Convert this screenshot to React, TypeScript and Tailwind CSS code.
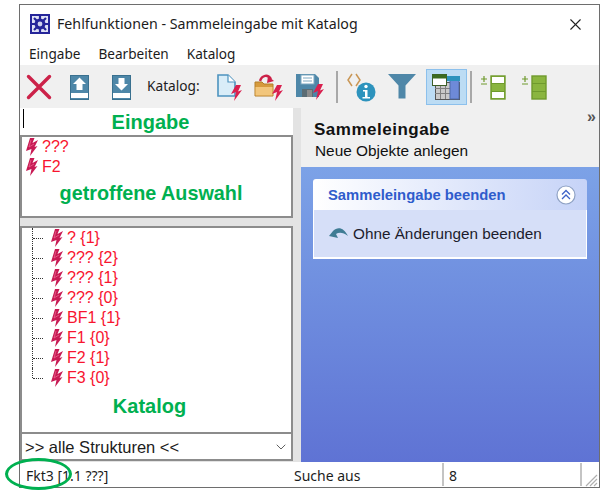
import { ChevronDown, X } from "lucide-react";

const segoe = "font-['Noto_Sans',sans-serif]";
const arial = "font-['Liberation_Sans',Arial,sans-serif]";

// the red flash that marks a malfunction in the lists
function Bolt() {
  return (
    <svg width="14" height="18" viewBox="0 0 14 18" className="shrink-0">
      <path d="M5 0 L9.5 0 L7.5 5 L13 2 L9.5 9 L12.5 8 L5 18 L6.5 11 L1 13 Z" fill="#c81a54" />
      <path d="M6 2 L4 9 L9 6" fill="none" stroke="#e8638c" strokeWidth="0.8" />
    </svg>
  );
}

// thinner flash that sits on the toolbar icons
function ToolBolt({ x, y }: { x: number; y: number }) {
  return (
    <path
      transform={`translate(${x} ${y})`}
      d="M6 0 L1 9 L6 7 L4 16 L12 5 L8 6.5 L11 0 Z"
      fill="#d9204f"
    />
  );
}

function CrossIcon() {
  return (
    <svg width="26" height="26" viewBox="0 0 26 26">
      <path d="M2.5 2.5 L23.5 23.5 M23.5 2.5 L2.5 23.5" stroke="#cc2249" strokeWidth="3.4" strokeLinecap="round" />
    </svg>
  );
}

function MoveIcon({ down }: { down?: boolean }) {
  return (
    <svg width="19" height="25" viewBox="0 0 19 25">
      <rect x="0.5" y="0.5" width="18" height="24" fill="#4e87a8" stroke="#39708f" />
      <rect x="1" y="18" width="17" height="5" fill="#ffffff" />
      <path d={down ? "M6.5 3 H12.5 V9 H16 L9.5 15.5 L3 9 H6.5 Z" : "M9.5 2.5 L16 9 H12.5 V15 H6.5 V9 H3 Z"} fill="#ffffff" />
    </svg>
  );
}

function NewIcon() {
  return (
    <svg width="26" height="28" viewBox="0 0 26 28">
      <path d="M1 1 H11 L18 8 V22 H1 Z" fill="#d9edf8" stroke="#4d93bf" strokeWidth="1.6" />
      <path d="M11 1 V8 H18" fill="#ffffff" stroke="#4d93bf" strokeWidth="1.2" />
      <ToolBolt x={13} y={11} />
    </svg>
  );
}

function OpenIcon() {
  return (
    <svg width="30" height="28" viewBox="0 0 30 28">
      <path d="M6 7 C8 1 14 0 17 5" fill="none" stroke="#cc2249" strokeWidth="2.4" />
      <path d="M14 2 L20 7 L13 9 Z" fill="#cc2249" />
      <path d="M1 8 H8 L10 10 H19 V22 H1 Z" fill="#d69a3c" stroke="#b47f28" />
      <path d="M1.5 13 H18.5 V21.5 H1.5 Z" fill="#f2c67c" />
      <ToolBolt x={17} y={11} />
    </svg>
  );
}

function SaveIcon() {
  return (
    <svg width="30" height="28" viewBox="0 0 30 28">
      <path d="M1 0 H20 L24 4 V23 H1 Z" fill="#4e87a8" />
      <rect x="6" y="1" width="13" height="9" fill="#ffffff" stroke="#7da7c0" />
      <path d="M8 4 H17 M8 7 H17" stroke="#7da7c0" />
      <rect x="7" y="15" width="11" height="8" fill="#5b6c74" />
      <rect x="12" y="16" width="5" height="7" fill="#8c8c8c" />
      <ToolBolt x={17} y={10} />
    </svg>
  );
}

function InfoIcon() {
  return (
    <svg width="29" height="29" viewBox="0 0 29 29">
      <path d="M5 1 L1 7 L5 13 M9 1 L13 7 L9 13" fill="none" stroke="#c99655" strokeWidth="1.5" />
      <circle cx="19" cy="19" r="9.5" fill="#2d93bd" />
      <circle cx="19" cy="13.5" r="1.7" fill="#ffffff" />
      <path d="M16 17 H20.5 V24 H23 V25.5 H15.5 V24 H18 V18.5 H16 Z" fill="#ffffff" />
    </svg>
  );
}

function FunnelIcon() {
  return (
    <svg width="28" height="25" viewBox="0 0 28 25">
      <path d="M0 0 H28 L17.5 11.5 V24.5 H10.5 V11.5 Z" fill="#4f87a8" />
    </svg>
  );
}

function TableIcon() {
  return (
    <svg width="29" height="26" viewBox="0 0 29 26">
      <rect x="3.5" y="8.5" width="24" height="17" fill="#c9c9c9" stroke="#555555" />
      <path d="M3 14.5 H18 M3 19.5 H18 M8.5 8 V25 M13.5 8 V25" stroke="#7f7f7f" />
      <rect x="18" y="6" width="9" height="19" fill="#6e8ad8" stroke="#4e6ba8" />
      <rect x="14" y="2" width="14" height="5" fill="#2d93bd" />
      <rect x="0.5" y="0.5" width="14" height="11" fill="#ffffff" stroke="#3c5f28" />
      <rect x="0.5" y="0.5" width="14" height="4" fill="#3c6a1e" />
    </svg>
  );
}

function RowsIcon({ filled }: { filled?: boolean }) {
  const outer = filled ? "#8ab53f" : "#ffffff";
  return (
    <svg width="25" height="25" viewBox="0 0 25 25">
      <path d="M0 4 H6 M3 1 V7 M0 9 H6" stroke="#6f9a2d" strokeWidth="1.2" />
      <rect x="10" y="1" width="14" height="23" fill="#8ab53f" stroke="#6f9a2d" strokeWidth="1.4" />
      <rect x="11" y="2" width="12" height="6" fill={outer} />
      <rect x="11" y="17" width="12" height="6" fill={outer} />
      <path d="M10 8.5 H24 M10 16.5 H24" stroke="#6f9a2d" />
    </svg>
  );
}

function ReturnIcon() {
  return (
    <svg width="20" height="14" viewBox="0 0 20 14">
      <path d="M0 9 L4 4 C9 -1 15 1 19 9 C14 5 10 5 7 7 L9 11 Z" fill="#3f7c94" />
    </svg>
  );
}

function CollapseIcon() {
  return (
    <svg width="20" height="20" viewBox="0 0 20 20">
      <circle cx="10" cy="10" r="9" fill="#ffffff" stroke="#8fa2c4" strokeWidth="1.2" />
      <path d="M6 9.5 L10 5.5 L14 9.5 M6 14 L10 10 L14 14" fill="none" stroke="#3f63c8" strokeWidth="1.3" />
    </svg>
  );
}

function ToolSeparator() {
  return <div className="w-[2px] h-[32px] bg-[#a8a8a8]" />;
}

const catalog = ["? {1}", "??? {2}", "??? {1}", "??? {0}", "BF1 {1}", "F1 {0}", "F2 {1}", "F3 {0}"];

export default function App() {
  return (
    <div className="relative w-[605px] h-[495px] bg-white overflow-hidden">
      <div className="ml-[19px] mt-[4px] w-[581px] h-[484px] border border-[#6e6e6e] flex flex-col bg-white">
        {/* Title bar */}
        <div className={`h-[36px] flex items-center pt-[2px] pl-[10px] pr-[14px] ${segoe}`}>
          <svg width="20" height="20" viewBox="0 0 20 20" className="shrink-0">
            <rect width="20" height="20" fill="#25259a" />
            <rect x="2" y="2" width="16" height="16" fill="#dfe2f5" />
            <path d="M10 2 V18 M2 10 H18 M4 4 L16 16 M16 4 L4 16" stroke="#25259a" strokeWidth="2.2" />
            <circle cx="10" cy="10" r="5.5" fill="#25259a" />
            <circle cx="10" cy="10" r="2.4" fill="#cfd3ef" />
          </svg>
          <span className="ml-[7px] text-[14.2px] text-[#1c1c1c] flex-1 whitespace-nowrap">Fehlfunktionen - Sammeleingabe mit Katalog</span>
          <X size={19} strokeWidth={1.4} className="text-[#222]" />
        </div>

        {/* Menu */}
        <div className={`h-[24px] flex items-center pt-[3px] pl-[9px] gap-[18px] text-[13.6px] text-[#1c1c1c] ${segoe}`}>
          <span>Eingabe</span>
          <span>Bearbeiten</span>
          <span>Katalog</span>
        </div>

        {/* Toolbar */}
        <div className={`h-[43px] bg-[#f0f0f0] flex items-center pl-[6px] ${segoe}`}>
          <CrossIcon />
          <div className="ml-[18px] mt-[1px]"><MoveIcon /></div>
          <div className="ml-[23px] mt-[1px]"><MoveIcon down /></div>
          <span className="ml-[16px] text-[13.7px] text-[#1c1c1c]">Katalog:</span>
          <div className="ml-[17px] mt-[3px]"><NewIcon /></div>
          <div className="ml-[11px] mt-[3px]"><OpenIcon /></div>
          <div className="ml-[11px] mt-[3px]"><SaveIcon /></div>
          <div className="ml-[11px]"><ToolSeparator /></div>
          <div className="ml-[9px] mt-[1px]"><InfoIcon /></div>
          <div className="ml-[12px]"><FunnelIcon /></div>
          <div className="ml-[10px] w-[41px] h-[36px] bg-[#bcdcf4] border border-[#8cc0ec] flex items-center justify-center"><TableIcon /></div>
          <div className="ml-[3px]"><ToolSeparator /></div>
          <div className="ml-[9px] mt-[2px]"><RowsIcon /></div>
          <div className="ml-[16px] mt-[2px]"><RowsIcon filled /></div>
        </div>

        {/* Body */}
        <div className="flex-1 flex min-h-0">
          <div className={`w-[273px] bg-[#e3e3e3] flex flex-col ${arial}`}>
            <div className="h-[27px] bg-white flex">
              <div className="ml-[3px] mt-[1px] w-[1px] h-[19px] bg-black" />
              <div className="flex-1 text-center text-[20px] font-bold text-[#00b050] leading-[28px] pr-[16px]">Eingabe</div>
            </div>
            <div className="h-[83px] border-2 border-[#8c8c8c] bg-white pl-[3px] text-[16px] text-[#f8142f] leading-[20px]">
              <div className="flex items-center h-[20px] gap-[3px]"><Bolt />???</div>
              <div className="flex items-center h-[20px] gap-[3px]"><Bolt />F2</div>
              <div className="text-center text-[19.8px] font-bold text-[#00b050] leading-[24px] mt-[4px] pr-[14px]">getroffene Auswahl</div>
            </div>
            <div className="h-[8px]" />
            <div className="h-[208px] border-2 border-[#8c8c8c] bg-white">
              <div className="text-[16px] text-[#f8142f] leading-[20px]">
                {catalog.map((item, i) => (
                  <div key={i} className="flex items-center h-[20px] pl-[10px]">
                    <div className={`w-[1px] border-l border-dotted border-[#333] ${i === catalog.length - 1 ? "h-[10px] self-start" : "self-stretch"}`} />
                    <div className="w-[10px] border-t border-dotted border-[#333]" />
                    <div className="ml-[7px] mr-[3px]"><Bolt /></div>
                    <span>{item}</span>
                  </div>
                ))}
              </div>
              <div className="text-center text-[20px] font-bold text-[#00b050] leading-[24px] mt-[6px] pr-[14px]">Katalog</div>
            </div>
            <div className="h-[27px] border-2 border-t-0 border-[#8c8c8c] bg-white flex items-center pt-[1px] pl-[3px] pr-[2px] text-[16.5px] text-[#1c1c1c]">
              <span className="flex-1">&gt;&gt; alle Strukturen &lt;&lt;</span>
              <ChevronDown size={16} strokeWidth={1.4} className="text-[#555]" />
            </div>
          </div>

          <div className="w-[8px] bg-[#e3e3e3]" />

          <div className={`flex-1 flex flex-col ${arial}`}>
            <div className="h-[59px] bg-[#f0f0f0] relative pl-[13px] pt-[12px] text-[#111]">
              <div className="text-[17px] tracking-[0.5px] font-bold leading-[20px]">Sammeleingabe</div>
              <div className="text-[15.4px] leading-[22px] pl-[1px]">Neue Objekte anlegen</div>
              <span className="absolute right-[3px] top-[2px] text-[16px] font-bold text-[#555] leading-[14px]">»</span>
            </div>
            <div className="flex-1 bg-gradient-to-b from-[#7ca2e7] to-[#5f73d4] pt-[12px] px-[12px]">
              <div className="h-[31px] rounded-t-[3px] bg-gradient-to-r from-white to-[#c6d3f7] flex items-center pt-[1px] pl-[15px] pr-[11px]">
                <span className="flex-1 text-[14.8px] font-bold text-[#2f5ccc]">Sammeleingabe beenden</span>
                <CollapseIcon />
              </div>
              <div className="h-[49px] bg-[#d6dff8] border-b-2 border-x border-white flex items-center pt-[1px] pl-[15px] text-[15.3px] text-[#1c1c2c]">
                <ReturnIcon />
                <span className="ml-[4px]">Ohne Änderungen beenden</span>
              </div>
            </div>
          </div>
        </div>

        {/* Status bar */}
        <div className={`h-[25px] flex items-center text-[14px] text-[#1c1c1c] bg-white ${segoe}`}>
          <div className="w-[274px] pl-[6px] pt-[2px] whitespace-nowrap">Fkt3 [1.1 ???]</div>
          <div className="w-[150px] pt-[2px] whitespace-nowrap border-r-2 border-[#c4c4c4]">Suche aus</div>
          <div className="w-[138px] pl-[5px] pt-[2px] border-r-2 border-[#c4c4c4]">8</div>
          <svg width="16" height="16" viewBox="0 0 16 16" className="self-end">
            <path d="M15 4 L4 15 M15 8 L8 15 M15 12 L12 15" stroke="#b0b0b0" strokeWidth="1.2" />
          </svg>
        </div>
      </div>

      {/* Green highlight drawn on top of the status bar */}
      <div className="absolute left-[5px] top-[458px] w-[67px] h-[32px] rounded-[50%] border-[3px] border-[#00b050]" />
    </div>
  );
}
